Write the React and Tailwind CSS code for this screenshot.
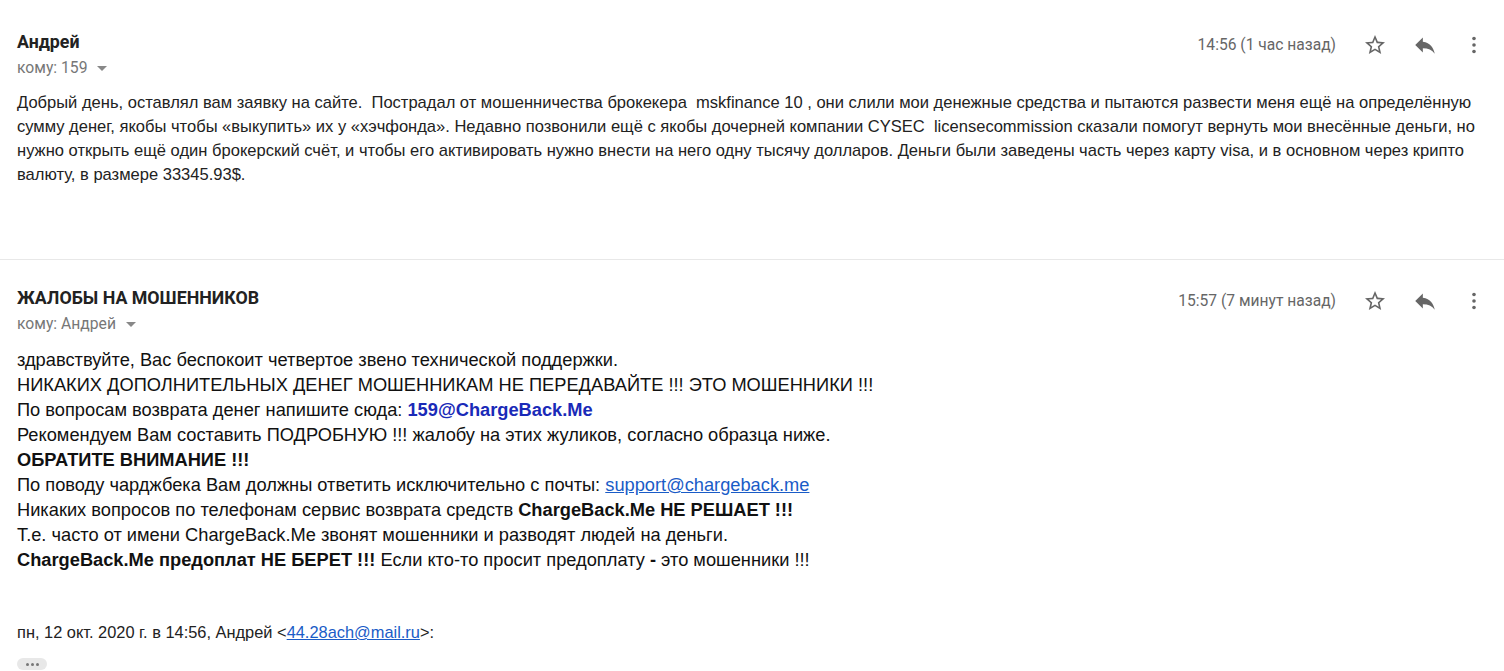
function StarIcon() {
  return (
    <svg width="24" height="24" viewBox="0 0 24 24" className="fill-[#666]">
      <path d="M22 9.24l-7.19-.62L12 2 9.19 8.63 2 9.24l5.46 4.73L5.82 21 12 17.27 18.18 21l-1.63-7.03L22 9.24zM12 15.4l-3.76 2.27 1-4.28-3.32-2.88 4.38-.38L12 6.1l1.71 4.04 4.38.38-3.32 2.88 1 4.28L12 15.4z" />
    </svg>
  );
}

function ReplyIcon() {
  return (
    <svg width="26" height="26" viewBox="0 0 24 24" className="fill-[#666]">
      <path d="M10 9V5l-7 7 7 7v-4.1c5 0 8.5 1.6 11 5.1-1-5-4-10-11-11z" />
    </svg>
  );
}

function MoreIcon() {
  return (
    <svg width="24" height="24" viewBox="0 0 24 24" className="fill-[#666]">
      <circle cx="12" cy="5.5" r="1.8" />
      <circle cx="12" cy="12" r="1.8" />
      <circle cx="12" cy="18.5" r="1.8" />
    </svg>
  );
}

function Header({ name, to, time }) {
  return (
    <div className="flex items-start justify-between">
      <div>
        <div className="text-[17.8px] font-bold text-[#222] leading-[20px]">{name}</div>
        <div className="mt-[7px] flex items-center gap-[10px] text-[15.7px] text-[#777] leading-[18px]">
          <span>кому: {to}</span>
          <span className="w-0 h-0 border-l-[5px] border-r-[5px] border-t-[5px] border-l-transparent border-r-transparent border-t-[#888]" />
        </div>
      </div>
      <div className="flex items-center text-[#666]">
        <span className="text-[15.6px] leading-[20px] mr-[27px]">{time}</span>
        <StarIcon />
        <span className="w-[25px]" />
        <ReplyIcon />
        <span className="w-[24px]" />
        <MoreIcon />
      </div>
    </div>
  );
}

export default function App() {
  const arial = { fontFamily: '"Liberation Sans", Arial, sans-serif' };
  return (
    <div className="w-[1504px] h-[671px] overflow-hidden bg-white" style={{ fontFamily: 'Roboto, "Liberation Sans", sans-serif' }}>
      <div className="pl-[17px] pr-[18px] pt-[32px] h-[260px] border-b border-[#e8e8e8]">
        <Header name="Андрей" to="159" time="14:56 (1 час назад)" />
        <div className="mt-[14px] text-[16.55px] leading-[24px] text-[#222] pr-[10px]" style={arial}>
          Добрый день, оставлял вам заявку на сайте.&nbsp; Пострадал от мошенничества брокекера&nbsp; mskfinance 10 , они слили мои денежные средства и пытаются развести меня ещё на определённую сумму денег, якобы чтобы «выкупить» их у «хэчфонда». Недавно позвонили ещё с якобы дочерней компании CYSEC&nbsp; licensecommission сказали помогут вернуть мои внесённые деньги, но нужно открыть ещё один брокерский счёт, и чтобы его активировать нужно внести на него одну тысячу долларов. Деньги были заведены часть через карту visa, и в основном через крипто валюту, в размере 33345.93$.
        </div>
      </div>
      <div className="pl-[17px] pr-[18px] pt-[28px]">
        <Header name="ЖАЛОБЫ НА МОШЕННИКОВ" to="Андрей" time="15:57 (7 минут назад)" />
        <div className="mt-[14px] text-[18.25px] leading-[25px] text-[#111]" style={arial}>
          <div>здравствуйте, Вас беспокоит четвертое звено технической поддержки.</div>
          <div>НИКАКИХ ДОПОЛНИТЕЛЬНЫХ ДЕНЕГ МОШЕННИКАМ НЕ ПЕРЕДАВАЙТЕ !!! ЭТО МОШЕННИКИ !!!</div>
          <div>По вопросам возврата денег напишите сюда: <b className="text-[#1a2ab8]">159@ChargeBack.Me</b></div>
          <div>Рекомендуем Вам составить ПОДРОБНУЮ !!! жалобу на этих жуликов, согласно образца ниже.</div>
          <div className="font-bold">ОБРАТИТЕ ВНИМАНИЕ !!!</div>
          <div>По поводу чарджбека Вам должны ответить исключительно с почты: <span className="text-[#1a5cc7] underline">support@chargeback.me</span></div>
          <div>Никаких вопросов по телефонам сервис возврата средств <b>ChargeBack.Me НЕ РЕШАЕТ !!!</b></div>
          <div>Т.е. часто от имени ChargeBack.Me звонят мошенники и разводят людей на деньги.</div>
          <div><b>ChargeBack.Me предоплат НЕ БЕРЕТ !!!</b> Если кто-то просит предоплату <b>-</b> это мошенники !!!</div>
        </div>
        <div className="mt-[50px] text-[16.4px] leading-[20px] text-[#222]" style={arial}>
          пн, 12 окт. 2020 г. в 14:56, Андрей &lt;<span className="text-[#1a5cc7] underline">44.28ach@mail.ru</span>&gt;:
        </div>
        <div className="mt-[16px] w-[30px] h-[12px] rounded-[6px] bg-[#e8e8e8] flex items-center justify-center gap-[2px]">
          <span className="w-[3px] h-[3px] rounded-full bg-[#777]" />
          <span className="w-[3px] h-[3px] rounded-full bg-[#777]" />
          <span className="w-[3px] h-[3px] rounded-full bg-[#777]" />
        </div>
      </div>
    </div>
  );
}
